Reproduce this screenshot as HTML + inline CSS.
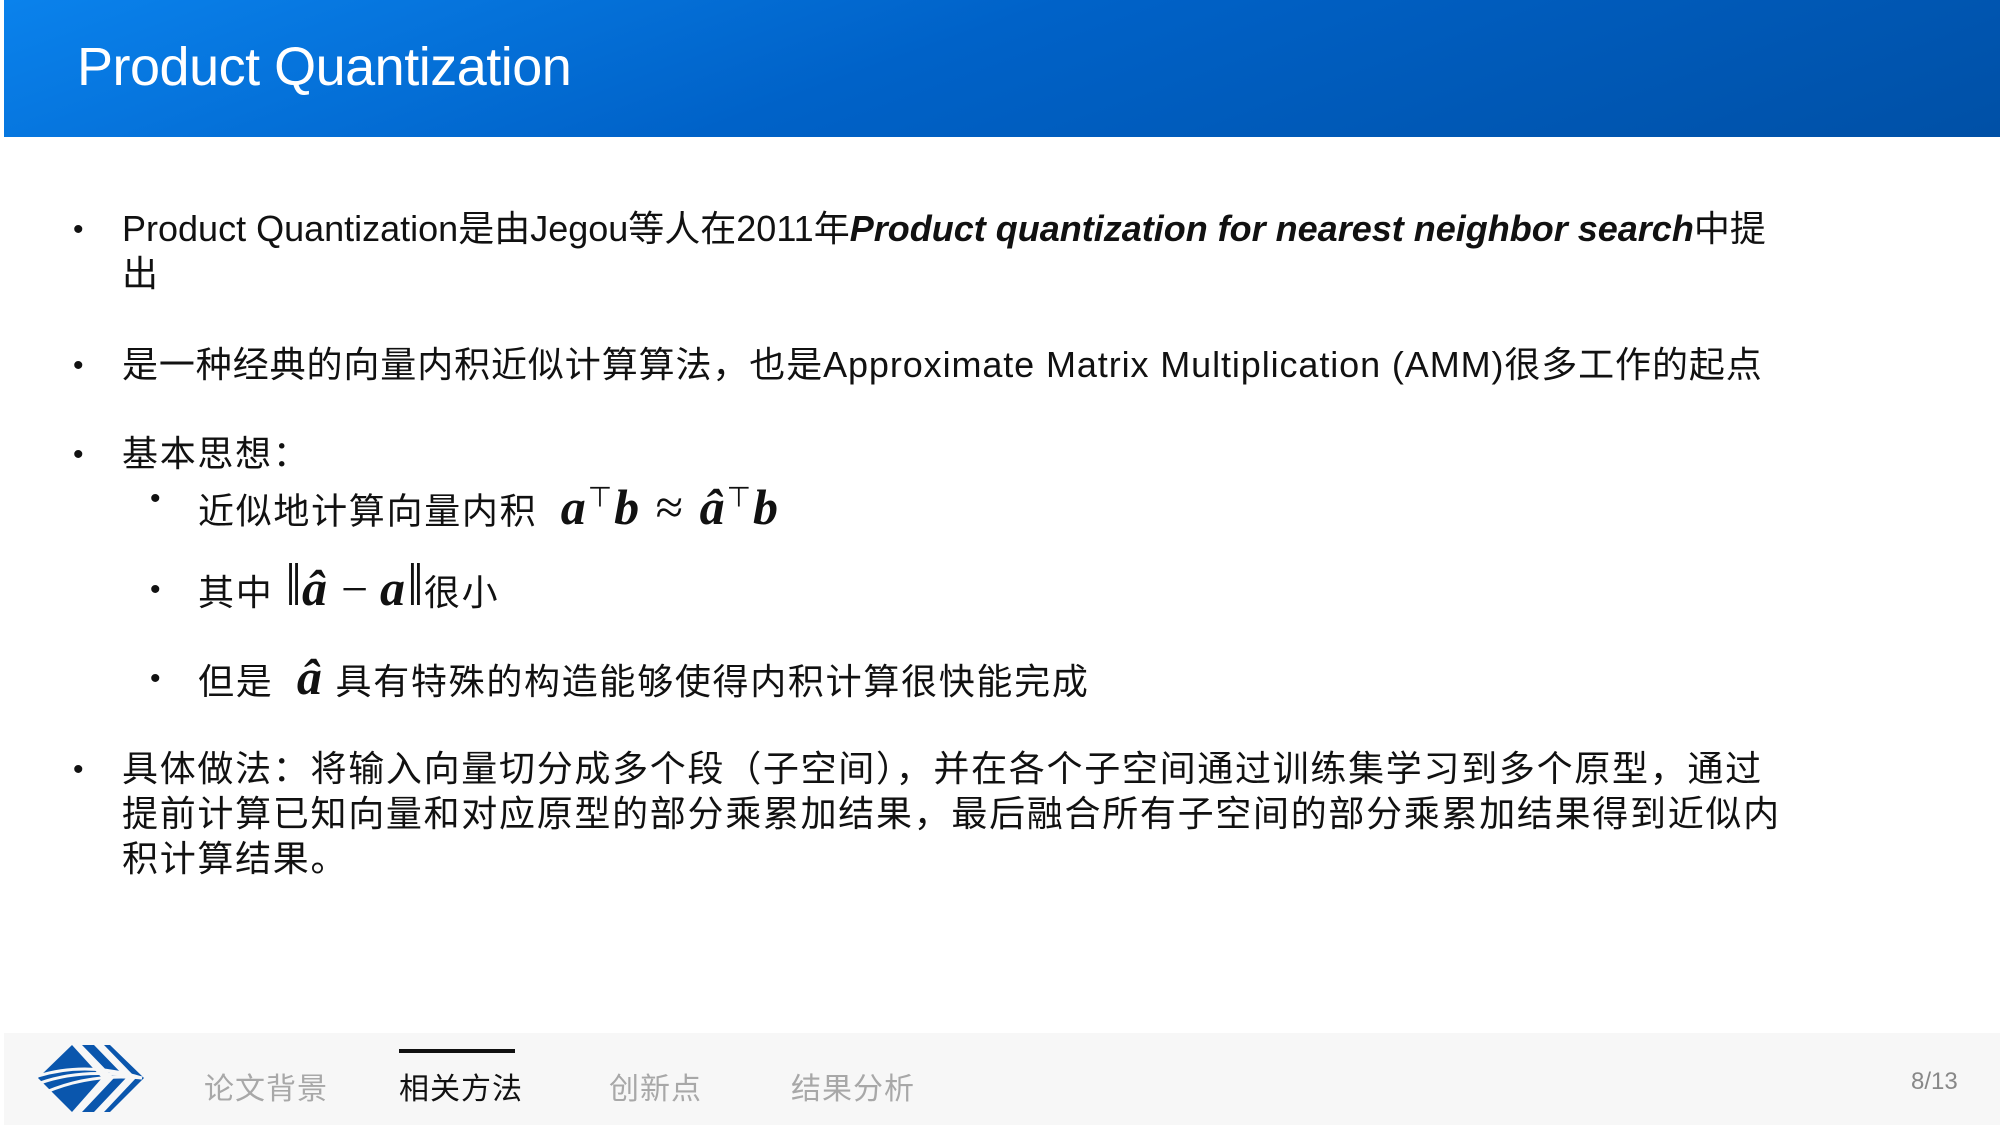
<!DOCTYPE html>
<html><head><meta charset="utf-8">
<style>
html,body{margin:0;padding:0}
body{width:2000px;height:1125px;position:relative;background:#fff;overflow:hidden;font-family:"Liberation Sans","Noto Sans CJK SC",sans-serif;color:#111}
.hdr{position:absolute;left:4px;top:0;width:1996px;height:137px;background:linear-gradient(160deg,#0a82ec 0%,#0062c8 45%,#0050a6 100%)}
.hdr h1{position:absolute;left:73px;top:36px;margin:0;font-weight:normal;color:#fff;font-size:54px;letter-spacing:-0.5px}
.t{position:absolute;font-size:36px;line-height:45px;white-space:nowrap}
.c{letter-spacing:1.7px}
.b{position:absolute;font-size:30px}
.m{font-family:"Liberation Serif",serif;font-weight:bold;font-style:italic;font-size:50px;letter-spacing:2px}
.n{font-family:"Liberation Serif",serif;font-size:60px;font-weight:normal;font-style:normal;line-height:0;letter-spacing:0}
.foot{position:absolute;left:4px;top:1033px;width:1996px;height:92px;background:#f7f7f7}
.nav{position:absolute;top:1064px;font-size:30px;color:#a8a8a8;letter-spacing:1px}
</style></head><body>
<div class="hdr"><h1>Product Quantization</h1></div>

<div class="b" style="left:73px;top:213px">•</div>
<div class="t" style="left:122px;top:206px">Product Quantization是由Jegou等人在2011年<b><i>Product quantization for nearest neighbor search</i></b>中提</div>
<div class="t" style="left:122px;top:251px">出</div>

<div class="b" style="left:73px;top:349px">•</div>
<div class="t" style="left:122px;top:342px;letter-spacing:0.9px">是一种经典的向量内积近似计算算法，也是Approximate Matrix Multiplication (AMM)很多工作的起点</div>

<div class="b" style="left:73px;top:438px">•</div>
<div class="t c" style="left:122px;top:431px">基本思想：</div>

<div class="b" style="left:150px;top:482px">•</div>
<div class="t c" style="left:198px;top:475px">近似地计算向量内积 &nbsp;<span class="m">a<sup style="font-size:28px;font-style:normal;font-weight:normal">⊤</sup>b <span style="font-weight:normal;font-style:normal">≈</span> â<sup style="font-size:28px;font-style:normal;font-weight:normal">⊤</sup>b</span></div>

<div class="b" style="left:150px;top:573px">•</div>
<div class="t c" style="left:198px;top:566px">其中 <span class="n">‖</span><span class="m">â</span><span class="n" style="font-size:48px"> − </span><span class="m">a</span><span class="n">‖</span>很小</div>

<div class="b" style="left:150px;top:662px">•</div>
<div class="t c" style="left:198px;top:655px">但是 &nbsp;<span class="m">â</span> 具有特殊的构造能够使得内积计算很快能完成</div>

<div class="b" style="left:73px;top:753px">•</div>
<div class="t c" style="left:122px;top:746px">具体做法：将输入向量切分成多个段（子空间），并在各个子空间通过训练集学习到多个原型，通过</div>
<div class="t c" style="left:122px;top:791px">提前计算已知向量和对应原型的部分乘累加结果，最后融合所有子空间的部分乘累加结果得到近似内</div>
<div class="t c" style="left:122px;top:836px">积计算结果。</div>

<div class="foot"></div>
<svg style="position:absolute;left:36px;top:1043px" width="110" height="72" viewBox="0 0 110 72">
<polygon points="2,35 36,2 66,35 36,69" fill="#0a56ad"/>
<polygon points="46,2 58,2 90,35 58,69 46,69 78,35" fill="#0a56ad"/>
<polygon points="68,2 74,2 108,35 74,69 68,69 100,35" fill="#0a56ad"/>
<path d="M2,33 Q50,18 106,35" stroke="#f7f7f7" stroke-width="3" fill="none"/>
<path d="M4,40 Q50,24 106,35" stroke="#f7f7f7" stroke-width="3" fill="none"/>
<path d="M10,49 Q55,30 106,35" stroke="#f7f7f7" stroke-width="3" fill="none"/>
</svg>
<div class="nav" style="left:204px">论文背景</div>
<div style="position:absolute;left:399px;top:1049px;width:116px;height:4px;background:#111"></div>
<div class="nav" style="left:399px;color:#111">相关方法</div>
<div class="nav" style="left:609px">创新点</div>
<div class="nav" style="left:791px">结果分析</div>
<div style="position:absolute;left:1911px;top:1068px;font-size:24px;color:#888">8/13</div>
</body></html>
